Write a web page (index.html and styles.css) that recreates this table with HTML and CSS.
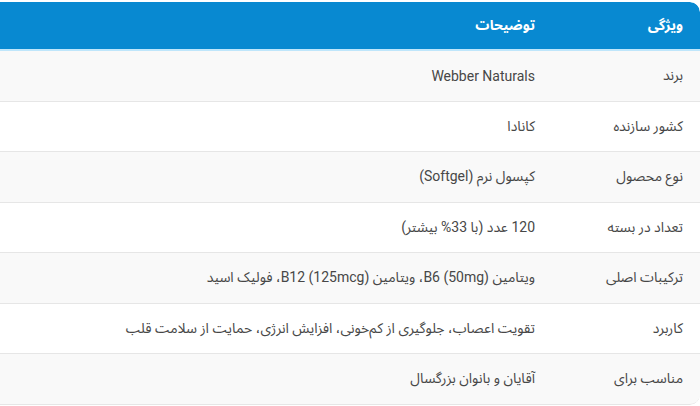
FILE: index.html
```html
<!DOCTYPE html>
<html lang="fa" dir="rtl">
<head>
<meta charset="utf-8">
<link rel="stylesheet" href="styles.css">
</head>
<body>
<div class="wrap">
<table class="spec">
<thead>
<tr><th class="key">ویژگی</th><th>توضیحات</th></tr>
</thead>
<tbody>
<tr><td class="key">برند</td><td>Webber Naturals</td></tr>
<tr><td class="key">کشور سازنده</td><td>کانادا</td></tr>
<tr><td class="key">نوع محصول</td><td>کپسول نرم (Softgel)</td></tr>
<tr><td class="key">تعداد در بسته</td><td>120 عدد (با 33% بیشتر)</td></tr>
<tr><td class="key">ترکیبات اصلی</td><td>ویتامین B6 (50mg)، ویتامین B12 (125mcg)، فولیک اسید</td></tr>
<tr><td class="key">کاربرد</td><td>تقویت اعصاب، جلوگیری از کم‌خونی، افزایش انرژی، حمایت از سلامت قلب</td></tr>
<tr><td class="key">مناسب برای</td><td>آقایان و بانوان بزرگسال</td></tr>
</tbody>
</table>
</div>
</body>
</html>
```
FILE: styles.css
```css
html, body {
  margin: 0;
  padding: 0;
  background: #ffffff;
}
body {
  font-family: "Roboto", "Noto Sans Arabic", "DejaVu Sans", sans-serif;
  font-size: 14px;
  color: #474747;
}
.wrap {
  padding-top: 2px;
}
.spec {
  width: 100%;
  border-collapse: separate;
  border-spacing: 0;
  border-top-right-radius: 10px;
  border-bottom-right-radius: 10px;
  overflow: hidden;
}
.spec th {
  background: #0889d1;
  color: #ffffff;
  font-weight: bold;
  text-align: right;
  height: 47px;
  padding: 0 17px;
  border-bottom: 2px solid #bfe6fb;
}
.spec thead th.key {
  border-top-right-radius: 10px;
}
.spec td {
  text-align: right;
  height: 49.5px;
  padding: 0 17px;
  border-bottom: 1px solid #e6e6e6;
  background: #ffffff;
}
.spec tbody tr:nth-child(odd) td {
  background: #f9f9f9;
}
.spec .key {
  width: 114px;
}
.spec tbody tr:last-child td.key {
  border-bottom-right-radius: 10px;
}
```
